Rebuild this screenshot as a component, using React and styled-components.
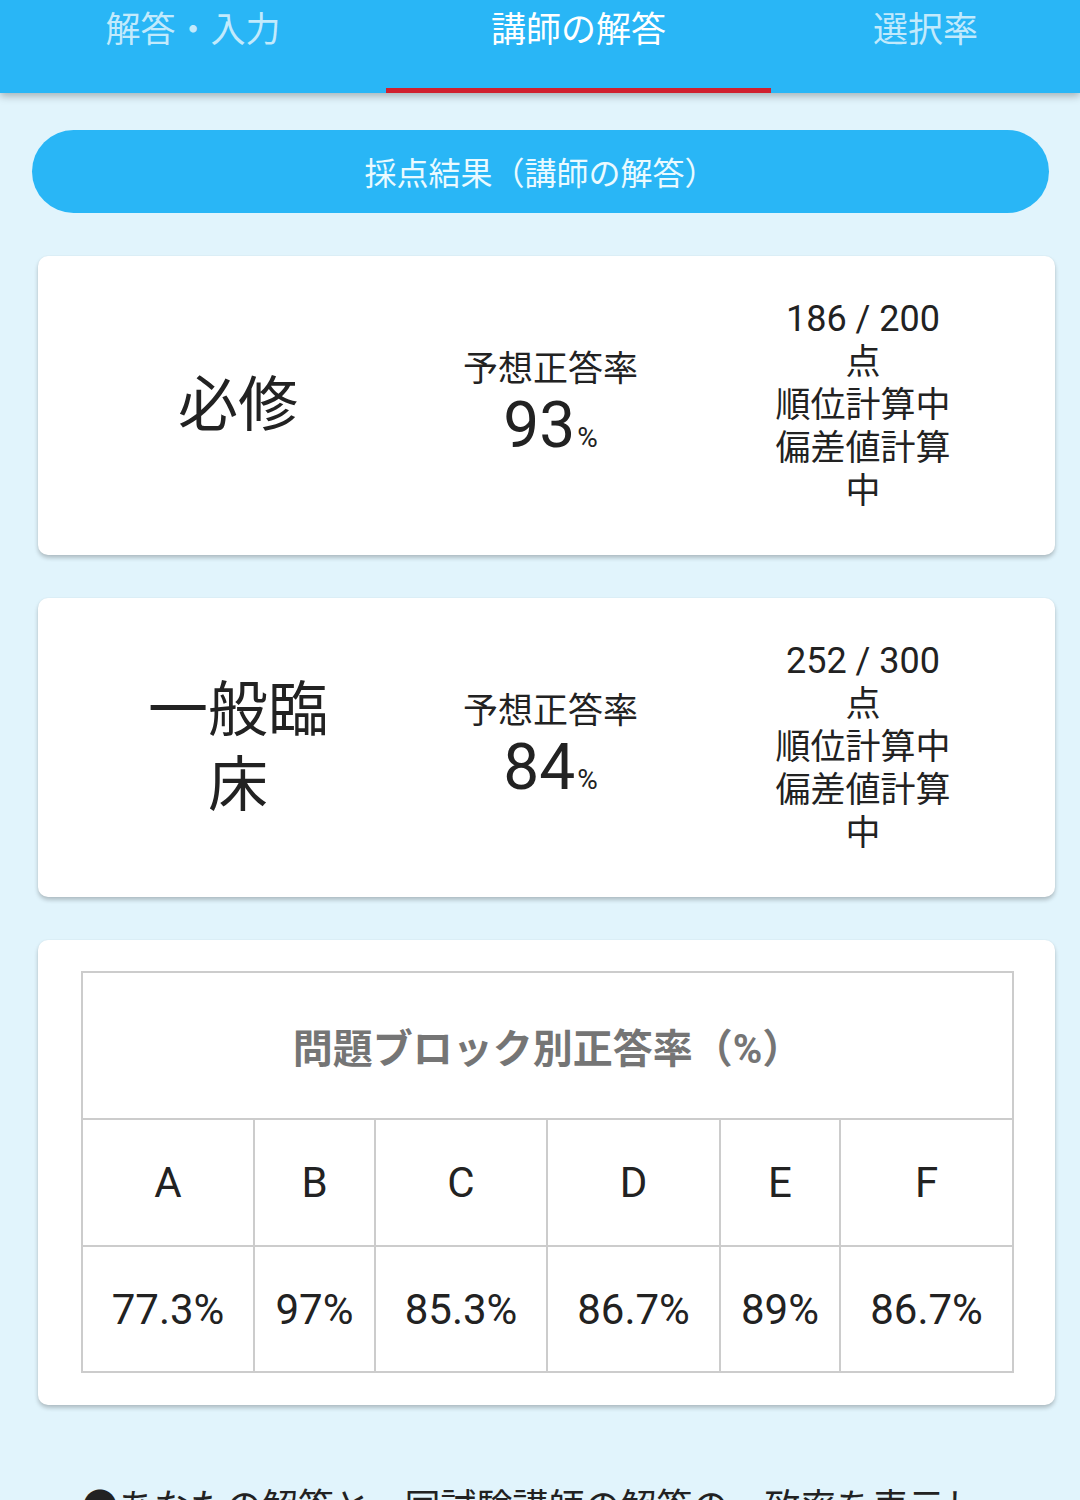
import React from "react";
import styled, { createGlobalStyle } from "styled-components";

const Global = createGlobalStyle`
  html, body { margin: 0; padding: 0; }
  body {
    background: #e1f4fc;
    font-family: Roboto, "Noto Sans CJK JP", "Noto Sans", sans-serif;
    color: #212121;
  }
  * { box-sizing: border-box; }
`;

const Header = styled.header`
  display: grid;
  grid-template-columns: 386px 385px 1fr;
  height: 93px;
  background: #29b6f6;
  box-shadow: 0 3px 8px rgba(0, 0, 0, 0.28);
  position: relative;
  z-index: 1;
`;

const Tab = styled.div`
  padding-top: 11px;
  text-align: center;
  font-size: 35px;
  line-height: 40px;
  color: ${(p) => (p.$active ? "#ffffff" : "rgba(255,255,255,0.72)")};
  border-bottom: 5px solid ${(p) => (p.$active ? "#d0202e" : "transparent")};
`;

const Main = styled.main`
  display: flex;
  flex-direction: column;
  padding-top: 37px;
`;

const Pill = styled.div`
  margin: 0 31px 0 32px;
  height: 83px;
  border-radius: 42px;
  background: #29b6f6;
  color: #eafaff;
  font-size: 32px;
  padding-bottom: 2px;
  display: flex;
  align-items: center;
  justify-content: center;
`;

const Card = styled.section`
  margin: 43px 25px 0 38px;
  background: #fff;
  border-radius: 10px;
  box-shadow: 0 3px 4px rgba(0, 0, 0, 0.22), 0 0 2px rgba(0, 0, 0, 0.06);
`;

const ScoreBody = styled.div`
  display: grid;
  grid-template-columns: 200px 200px 200px;
  justify-content: space-between;
  align-items: center;
  padding: 42px 92px 42px 100px;
  min-height: 299px;
`;

const Subject = styled.div`
  font-size: 60px;
  line-height: 75px;
  text-align: center;
  color: #222;
`;

const RateCol = styled.div`
  margin-top: 10px;
  text-align: center;
  color: #222;
`;

const RateLabel = styled.div`
  font-size: 35px;
  line-height: 43px;
`;

const RateValue = styled.div`
  font-size: 64px;
  line-height: 70px;
`;

const Unit = styled.span`
  font-size: 28px;
  margin-left: 2px;
`;

const InfoCol = styled.div`
  text-align: center;
  font-size: 35px;
  line-height: 43px;
  color: #222;
`;

const ScoreLine = styled.div`
  font-size: 36px;
`;

const TableCard = styled(Card)`
  padding: 31px 43px 32px 43px;
`;

const Table = styled.table`
  width: 931px;
  border-collapse: collapse;
  table-layout: fixed;
  border: 2px solid #cccccc;
`;

const Th = styled.th`
  height: 147px;
  border: 2px solid #cccccc;
  font-size: 40px;
  font-weight: 700;
  color: #757575;
  text-align: center;
`;

const Td = styled.td`
  height: ${(p) => p.$h}px;
  border: 2px solid #cccccc;
  font-size: 42px;
  text-align: center;
  color: #222;
`;

const Note = styled.p`
  margin: 76px 76px 0 82px;
  font-size: 36px;
  line-height: 54px;
  color: #222;
`;

const scores = [
  { name: "必修", rate: 93, score: "186 / 200" },
  { name: "一般臨床", rate: 84, score: "252 / 300" },
];

const blocks = [
  { k: "A", v: "77.3%", w: 172 },
  { k: "B", v: "97%", w: 121 },
  { k: "C", v: "85.3%", w: 172 },
  { k: "D", v: "86.7%", w: 173 },
  { k: "E", v: "89%", w: 120 },
  { k: "F", v: "86.7%", w: 173 },
];

export default function App() {
  return (
    <>
      <Global />
      <Header>
        <Tab>解答・入力</Tab>
        <Tab $active>講師の解答</Tab>
        <Tab>選択率</Tab>
      </Header>
      <Main>
        <Pill>採点結果（講師の解答）</Pill>
        {scores.map((s) => (
          <Card key={s.name}>
            <ScoreBody>
              <Subject>{s.name}</Subject>
              <RateCol>
                <RateLabel>予想正答率</RateLabel>
                <RateValue>
                  {s.rate}
                  <Unit>%</Unit>
                </RateValue>
              </RateCol>
              <InfoCol>
                <ScoreLine>{s.score}</ScoreLine>
                <div>点</div>
                <div>順位計算中</div>
                <div>偏差値計算中</div>
              </InfoCol>
            </ScoreBody>
          </Card>
        ))}
        <TableCard>
          <Table>
            <colgroup>
              {blocks.map((b) => (
                <col key={b.k} style={{ width: b.w }} />
              ))}
            </colgroup>
            <thead>
              <tr>
                <Th colSpan={6}>問題ブロック別正答率（%）</Th>
              </tr>
            </thead>
            <tbody>
              <tr>
                {blocks.map((b) => (
                  <Td key={b.k} $h={127}>{b.k}</Td>
                ))}
              </tr>
              <tr>
                {blocks.map((b) => (
                  <Td key={b.k} $h={126}>{b.v}</Td>
                ))}
              </tr>
            </tbody>
          </Table>
        </TableCard>
        <Note>
          ●あなたの解答と、同試験講師の解答の一致率を表示します。講師ごとの解答は下の一覧から確認できます。
        </Note>
      </Main>
    </>
  );
}
